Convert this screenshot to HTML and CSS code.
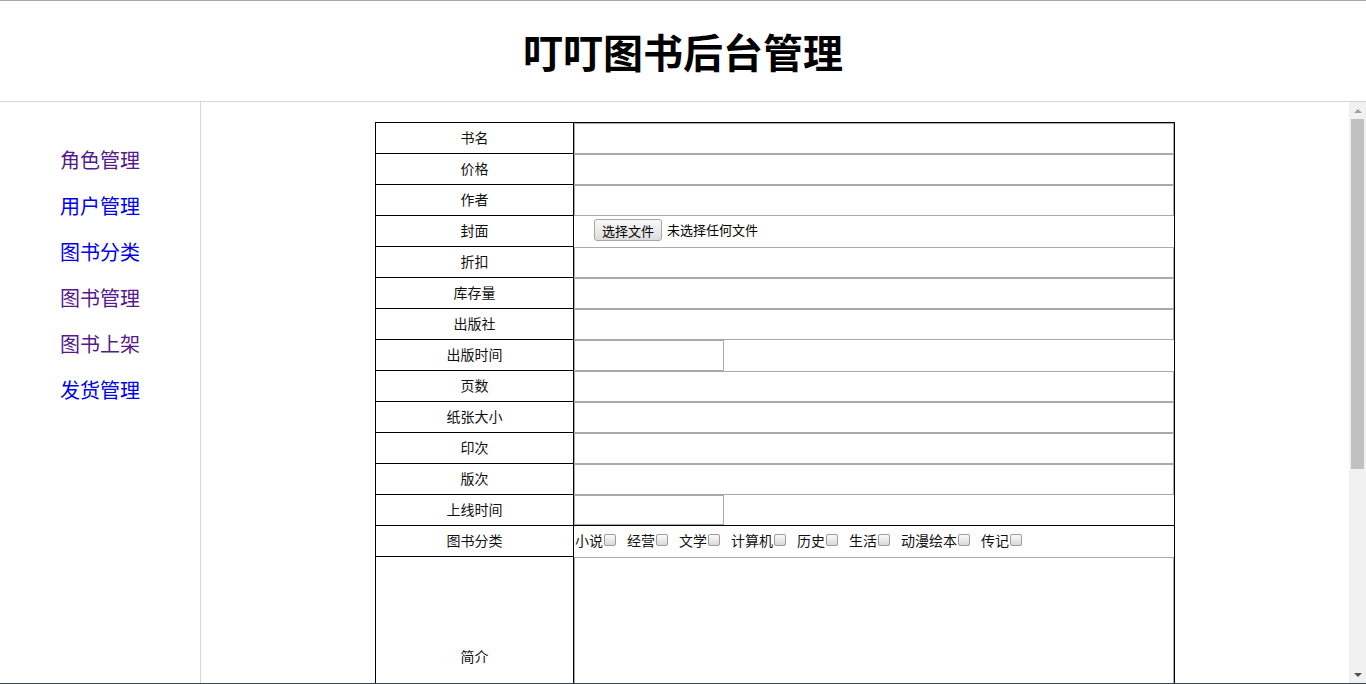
FILE: index.html
```html
<!DOCTYPE html>
<html lang="zh-CN">
<head>
<meta charset="utf-8">
<title>叮叮图书后台管理</title>
<link rel="stylesheet" href="styles.css">
</head>
<body>
<header class="top">
  <h1 class="title">叮叮图书后台管理</h1>
</header>
<div class="frame">
  <nav class="sidebar">
    <a href="#" class="nav visited">角色管理</a>
    <a href="#" class="nav">用户管理</a>
    <a href="#" class="nav">图书分类</a>
    <a href="#" class="nav visited">图书管理</a>
    <a href="#" class="nav visited">图书上架</a>
    <a href="#" class="nav">发货管理</a>
  </nav>
  <main class="main">
    <div class="content">
      <form class="form">
        <div class="lbl">书名</div>
        <div class="fld"><input class="txt" type="text"></div>
        <div class="lbl">价格</div>
        <div class="fld"><input class="txt" type="text"></div>
        <div class="lbl">作者</div>
        <div class="fld"><input class="txt" type="text"></div>
        <div class="lbl">封面</div>
        <div class="fld file"><button type="button" class="filebtn">选择文件</button><span class="filetxt">未选择任何文件</span></div>
        <div class="lbl">折扣</div>
        <div class="fld"><input class="txt" type="text"></div>
        <div class="lbl">库存量</div>
        <div class="fld"><input class="txt" type="text"></div>
        <div class="lbl">出版社</div>
        <div class="fld"><input class="txt" type="text"></div>
        <div class="lbl">出版时间</div>
        <div class="fld"><input class="txt short" type="text"></div>
        <div class="lbl">页数</div>
        <div class="fld"><input class="txt" type="text"></div>
        <div class="lbl">纸张大小</div>
        <div class="fld"><input class="txt" type="text"></div>
        <div class="lbl">印次</div>
        <div class="fld"><input class="txt" type="text"></div>
        <div class="lbl">版次</div>
        <div class="fld"><input class="txt" type="text"></div>
        <div class="lbl">上线时间</div>
        <div class="fld closed"><input class="txt short low" type="text"></div>
        <div class="lbl">图书分类</div>
        <div class="fld cats">
          <span class="cat">小说</span><input type="checkbox" class="cb">
          <span class="cat">经营</span><input type="checkbox" class="cb">
          <span class="cat">文学</span><input type="checkbox" class="cb">
          <span class="cat">计算机</span><input type="checkbox" class="cb">
          <span class="cat">历史</span><input type="checkbox" class="cb">
          <span class="cat">生活</span><input type="checkbox" class="cb">
          <span class="cat">动漫绘本</span><input type="checkbox" class="cb">
          <span class="cat">传记</span><input type="checkbox" class="cb">
        </div>
        <div class="lbl tall">简介</div>
        <div class="fld"><textarea class="area"></textarea></div>
      </form>
    </div>
    <div class="scrollbar">
      <div class="arrow up"></div>
      <div class="thumb"></div>
      <div class="track"></div>
      <div class="arrow down"></div>
    </div>
  </main>
</div>
<div class="taskbar"></div>
</body>
</html>
```
FILE: styles.css
```css
html, body {
  margin: 0;
  padding: 0;
  background: #fff;
  height: 684px;
  overflow: hidden;
  font-family: "Noto Sans CJK SC", "Microsoft YaHei", sans-serif;
  color: #000;
}

.top {
  height: 100px;
  border-top: 1px solid #a8a8a8;
  border-bottom: 1px solid #d4d4d4;
  display: flex;
  align-items: center;
  justify-content: center;
}

.title {
  margin: 0;
  padding-bottom: 1px;
  font-size: 40px;
  line-height: 1;
  font-weight: 700;
}

.frame {
  display: flex;
  height: 581px;
}

.sidebar {
  width: 201px;
  border-right: 1px solid #d6d6d6;
  padding: 35px 0 0 60px;
  box-sizing: border-box;
  display: flex;
  flex-direction: column;
  align-items: flex-start;
  flex-shrink: 0;
}

.nav {
  font-size: 20px;
  line-height: 46px;
  text-decoration: none;
  color: #0000ee;
}

.nav.visited {
  color: #551a8b;
}

.main {
  flex: 1;
  display: flex;
  min-width: 0;
}

.content {
  flex: 1;
  overflow: hidden;
  padding-top: 20px;
}

.form {
  width: 800px;
  margin: 0 auto;
  border: 1px solid #000;
  border-bottom: none;
  box-sizing: border-box;
  display: grid;
  grid-template-columns: 198px 1fr;
}

.lbl {
  height: 31px;
  box-sizing: border-box;
  border-right: 1px solid #000;
  border-bottom: 1px solid #000;
  padding-bottom: 2px;
  display: flex;
  align-items: center;
  justify-content: center;
  font-size: 14px;
  color: #111;
}

.lbl.tall {
  height: 200px;
}

.fld {
  min-width: 0;
}

.txt {
  display: block;
  width: 100%;
  height: 31px;
  margin: 0;
  padding: 0 2px;
  box-sizing: border-box;
  border: 1px solid #a9a9a9;
  background: #fff;
  font-size: 13px;
  outline: none;
}

.txt.short {
  width: 150px;
}

.txt.low {
  height: 30px;
}

.fld.closed {
  border-bottom: 1px solid #000;
  height: 31px;
  box-sizing: border-box;
}

.fld.file {
  display: flex;
  align-items: center;
  padding: 0 0 3px 20px;
  font-size: 13px;
}

.filebtn {
  height: 22px;
  padding: 0 7px;
  margin: 0;
  font-family: inherit;
  font-size: 13px;
  line-height: 19px;
  color: #000;
  border: 1px solid #a6a6a6;
  border-radius: 3px;
  background: linear-gradient(#f8f8f8, #dddddd);
}

.filetxt {
  margin-left: 5px;
  padding-bottom: 1px;
}

.fld.cats {
  display: flex;
  align-items: center;
  padding: 0 0 3px 1px;
  font-size: 14px;
  color: #111;
}

.cb {
  appearance: none;
  -webkit-appearance: none;
  width: 12px;
  height: 12px;
  margin: 0 11px 0 1px;
  box-sizing: border-box;
  border: 1px solid #9c9c9c;
  border-radius: 2px;
  background: linear-gradient(#fbfbfb, #d8d8d8);
}

.area {
  display: block;
  width: 100%;
  height: 200px;
  margin: 0;
  box-sizing: border-box;
  border: 1px solid #a9a9a9;
  resize: none;
  outline: none;
}

.scrollbar {
  width: 17px;
  flex-shrink: 0;
  background: #f1f1f1;
  display: flex;
  flex-direction: column;
}

.arrow {
  height: 17px;
  display: flex;
  align-items: center;
  justify-content: center;
}

.arrow::before {
  content: "";
  width: 0;
  height: 0;
  border-left: 4px solid transparent;
  border-right: 4px solid transparent;
}

.arrow.up::before {
  border-bottom: 4px solid #a3a3a3;
}

.arrow.down::before {
  border-top: 4px solid #505050;
}

.thumb {
  height: 350px;
  margin: 0 2px;
  background: #c1c1c1;
}

.track {
  flex: 1;
}

.taskbar {
  height: 1px;
  background: #3a444c;
}
```
